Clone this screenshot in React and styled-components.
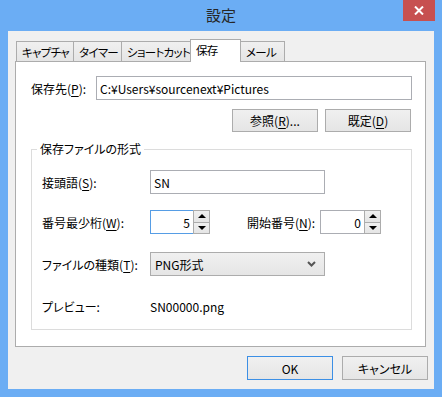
import React from 'react';
import styled, { createGlobalStyle } from 'styled-components';

const GlobalStyle = createGlobalStyle`
  html, body {
    margin: 0;
    padding: 0;
  }
  body {
    background: #6badf4;
    font-family: "Noto Sans CJK JP", "Noto Sans", sans-serif;
    font-size: 12px;
    font-feature-settings: "palt";
    color: #000;
  }
`;

const tabs = [
  { label: 'キャプチャ', width: 58 },
  { label: 'タイマー', width: 49 },
  { label: 'ショートカット', width: 70 },
  { label: '保存', width: 51, active: true },
  { label: 'メール', width: 45 },
];

function Spin({ value, focus, width }) {
  return (
    <SpinBox $w={width}>
      <SpinField $focus={focus}>{value}</SpinField>
      <SpinButtons>
        <SpinButton>
          <Arrow $up />
        </SpinButton>
        <SpinButton>
          <Arrow />
        </SpinButton>
      </SpinButtons>
    </SpinBox>
  );
}

export default function App() {
  return (
    <>
      <GlobalStyle />
      <Window>
        <TitleBar>
          <Title>設定</Title>
          <CloseButton>
            <svg width='10' height='9' viewBox='0 0 10 9'>
              <path d='M1 0.5 L9 8.5 M9 0.5 L1 8.5' stroke='#fff' strokeWidth='2' />
            </svg>
          </CloseButton>
        </TitleBar>
        <Client>
          <TabStrip>
            {tabs.map((t, i) => (
              <Tab key={t.label} $w={t.width} $active={t.active} $first={i === 0}>
                {t.label}
              </Tab>
            ))}
          </TabStrip>
          <Panel>
            <PathRow>
              <Label $w={65}>
                保存先(<u>P</u>):
              </Label>
              <TextBox $grow>C:¥Users¥sourcenext¥Pictures</TextBox>
            </PathRow>
            <ButtonRow>
              <Button>
                参照(<u>R</u>)...
              </Button>
              <Button>
                既定(<u>D</u>)
              </Button>
            </ButtonRow>
            <Group>
              <GroupTitle>保存ファイルの形式</GroupTitle>
              <FieldRow>
                <Label>
                  接頭語(<u>S</u>):
                </Label>
                <TextBox $w={175}>SN</TextBox>
              </FieldRow>
              <FieldRow $mt={16}>
                <Label>
                  番号最少桁(<u>W</u>):
                </Label>
                <Spin value='5' focus width={60} />
                <Label $w={73} $ml={37}>
                  開始番号(<u>N</u>):
                </Label>
                <Spin value='0' width={61} />
              </FieldRow>
              <FieldRow $mt={18}>
                <Label>
                  ファイルの種類(<u>T</u>):
                </Label>
                <Combo>
                  <span>PNG形式</span>
                  <svg width='9' height='6' viewBox='0 0 9 6'>
                    <path d='M1 1 L4.5 4.5 L8 1' fill='none' stroke='#555' strokeWidth='2' />
                  </svg>
                </Combo>
              </FieldRow>
              <FieldRow $mt={22} $h={16}>
                <Label>プレビュー:</Label>
                <span>SN00000.png</span>
              </FieldRow>
            </Group>
          </Panel>
          <Footer>
            <Button $default $h={24}>
              OK
            </Button>
            <Button $h={24}>キャンセル</Button>
          </Footer>
        </Client>
      </Window>
    </>
  );
}

const Window = styled.div`
  width: 442px;
  height: 397px;
  display: flex;
  flex-direction: column;
  background: #6badf4;
  overflow: hidden;
`;

const TitleBar = styled.div`
  height: 31px;
  display: grid;
  grid-template-columns: 1fr auto 1fr;
  align-items: start;
`;

const Title = styled.div`
  grid-column: 2;
  font-size: 15px;
  line-height: 30px;
  color: #262626;
`;

const CloseButton = styled.div`
  grid-column: 3;
  justify-self: end;
  margin-right: 7px;
  width: 32px;
  height: 21px;
  background: #c75050;
  display: flex;
  align-items: center;
  justify-content: center;
`;

const Client = styled.div`
  flex: 1;
  margin: 0 8px 8px;
  padding: 8px 8px 0 7px;
  background: #f0f0f0;
  display: flex;
  flex-direction: column;
`;

const TabStrip = styled.div`
  height: 22px;
  display: flex;
  align-items: flex-end;
  padding-left: 1px;
  position: relative;
  z-index: 1;
`;

const Tab = styled.div`
  box-sizing: border-box;
  width: ${(p) => p.$w}px;
  height: ${(p) => (p.$active ? 23 : 20)}px;
  margin-bottom: ${(p) => (p.$active ? -1 : 0)}px;
  margin-left: ${(p) => (p.$first ? 0 : -1)}px;
  padding: 0 0 ${(p) => (p.$active ? 2 : 0)}px 5px;
  border: 1px solid #acacac;
  border-bottom: none;
  background: ${(p) => (p.$active ? '#fff' : 'linear-gradient(#f0f0f0, #e5e5e5)')};
  position: relative;
  z-index: ${(p) => (p.$active ? 2 : 1)};
  display: flex;
  align-items: center;
  font-size: 11.5px;
  letter-spacing: -0.7px;
  white-space: nowrap;
`;

const Panel = styled.div`
  box-sizing: border-box;
  height: 286px;
  padding: 14px 13px 16px 15px;
  background: #fff;
  border: 1px solid #acacac;
  display: flex;
  flex-direction: column;
`;

const PathRow = styled.div`
  display: flex;
  align-items: center;
  height: 24px;
`;

const Label = styled.div`
  flex: none;
  width: ${(p) => p.$w || 108}px;
  margin-left: ${(p) => p.$ml || 0}px;
  white-space: nowrap;
  & > u {
    text-underline-offset: 2px;
  }
`;

const TextBox = styled.div`
  box-sizing: border-box;
  ${(p) => (p.$grow ? 'flex: 1;' : `width: ${p.$w}px;`)}
  height: 24px;
  padding: 0 3px;
  border: 1px solid #abadb3;
  background: #fff;
  display: flex;
  align-items: center;
`;

const ButtonRow = styled.div`
  display: flex;
  justify-content: flex-end;
  gap: 7px;
  margin-top: 9px;
  padding-right: 1px;
`;

const Button = styled.button`
  box-sizing: border-box;
  width: 86px;
  height: ${(p) => p.$h || 23}px;
  padding: 0;
  border: 1px solid ${(p) => (p.$default ? '#3c8fe5' : '#acacac')};
  background: linear-gradient(#f0f0f0, #e5e5e5);
  font-family: inherit;
  font-size: 12px;
  font-feature-settings: "palt";
  color: #000;
  & > u {
    text-underline-offset: 2px;
  }
`;

const Group = styled.div`
  position: relative;
  margin-top: 17px;
  padding: 20px 10px 15px;
  border: 1px solid #dcdcdc;
  display: flex;
  flex-direction: column;
`;

const GroupTitle = styled.div`
  position: absolute;
  top: -9px;
  left: 5px;
  padding: 0 3px;
  line-height: 16px;
  background: #fff;
`;

const FieldRow = styled.div`
  display: flex;
  align-items: center;
  height: ${(p) => p.$h || 24}px;
  margin-top: ${(p) => p.$mt || 0}px;
`;

const SpinBox = styled.div`
  flex: none;
  width: ${(p) => p.$w}px;
  height: 24px;
  display: flex;
`;

const SpinField = styled.div`
  box-sizing: border-box;
  flex: 1;
  padding-right: 3px;
  border: 1px solid ${(p) => (p.$focus ? '#569de5' : '#abadb3')};
  border-right: none;
  display: flex;
  align-items: center;
  justify-content: flex-end;
`;

const SpinButtons = styled.div`
  width: 17px;
  display: flex;
  flex-direction: column;
`;

const SpinButton = styled.div`
  box-sizing: border-box;
  flex: 1;
  border: 1px solid #acacac;
  & + & {
    border-top: none;
  }
  background: linear-gradient(#f0f0f0, #e5e5e5);
  display: flex;
  align-items: center;
  justify-content: center;
`;

const Arrow = styled.div`
  width: 0;
  height: 0;
  border-left: 4px solid transparent;
  border-right: 4px solid transparent;
  ${(p) => (p.$up ? 'border-bottom: 4px solid #000;' : 'border-top: 4px solid #000;')}
`;

const Combo = styled.div`
  box-sizing: border-box;
  width: 175px;
  height: 24px;
  padding: 0 8px 0 4px;
  border: 1px solid #acacac;
  background: linear-gradient(#f0f0f0, #e5e5e5);
  display: flex;
  align-items: center;
  justify-content: space-between;
`;

const Footer = styled.div`
  display: flex;
  justify-content: flex-end;
  gap: 9px;
  margin-top: 9px;
  margin-right: -2px;
`;
